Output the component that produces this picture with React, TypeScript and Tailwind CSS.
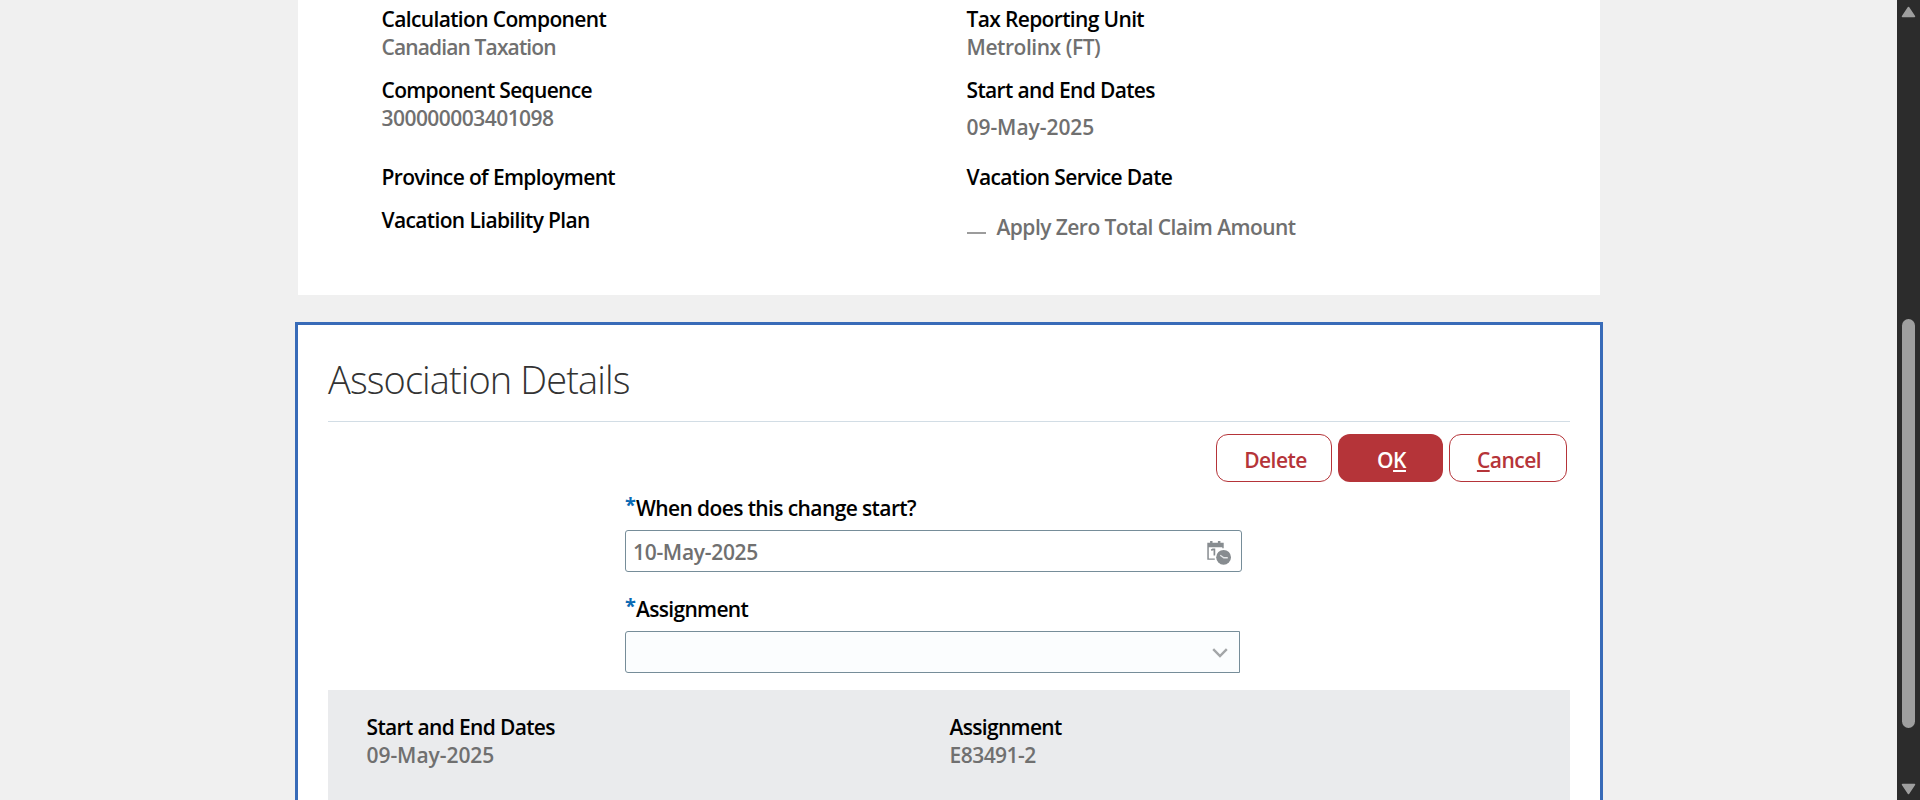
import React from "react";

function Label({ children, className = "" }: { children: React.ReactNode; className?: string }) {
  return <div className={`h-7 leading-[28px] whitespace-nowrap text-black ${className}`}>{children}</div>;
}

function Value({ children, className = "" }: { children: React.ReactNode; className?: string }) {
  return <div className={`h-7 leading-[28px] whitespace-nowrap text-[#707070] ${className}`}>{children}</div>;
}

function Required() {
  return <span className="-mt-[3px] w-[11px] shrink-0 text-[20px] font-bold text-[#0a6ab4]">*</span>;
}

function CalendarIcon() {
  return (
    <svg width="24" height="24" viewBox="0 0 24 24" className="mt-[3px] shrink-0">
      <path d="M0.300 1.800h16.400v5.500h-1.400V6.300H1.800V17.500h6v1.300H0.300z" fill="#878c90" />
      <path d="M3.100 0h2.400v4H3.100zM10.900 0h2.500v4h-2.500z" fill="#878c90" />
      <path d="M4.200 9.300l1.600-.9h1.600v6" fill="none" stroke="#878c90" strokeWidth="1.700" />
      <circle cx="16.600" cy="16.300" r="8.400" fill="#fff" />
      <circle cx="16.600" cy="16.300" r="7.400" fill="#878c90" />
      <path d="M13.200 14.200l3.600 2.500h4" fill="none" stroke="#e4e6e7" strokeWidth="1.400" />
    </svg>
  );
}

function PersonDetails() {
  return (
    <section className="flex h-[295px] w-[1302px] shrink-0 bg-white pl-[83.5px] pt-[5px]">
      <div className="w-[585px]">
        <Label className="tracking-[-0.64px]">Calculation Component</Label>
        <Value className="tracking-[-0.87px]">Canadian Taxation</Value>
        <Label className="mt-[15px] tracking-[-0.68px]">Component Sequence</Label>
        <Value className="tracking-[-0.54px]">300000003401098</Value>
        <Label className="mt-[31px] tracking-[-0.64px]">Province of Employment</Label>
        <Label className="mt-[15px] tracking-[-0.64px]">Vacation Liability Plan</Label>
      </div>
      <div>
        <Label className="tracking-[-0.65px]">Tax Reporting Unit</Label>
        <Value className="tracking-[-0.45px]">Metrolinx (FT)</Value>
        <Label className="mt-[15px] tracking-[-0.65px]">Start and End Dates</Label>
        <Value className="mt-[9px] tracking-[-0.05px]">09-May-2025</Value>
        <Label className="mt-[22px] tracking-[-0.65px]">Vacation Service Date</Label>
        <div className="mt-[22px] flex">
          <span className="mt-[19px] h-[2px] w-[19px] bg-[#9c9c9c]" />
          <Value className="ml-[11px] tracking-[-0.55px]">Apply Zero Total Claim Amount</Value>
        </div>
      </div>
    </section>
  );
}

function AssociationDetails() {
  return (
    <section className="mt-[27px] h-[478px] w-[1308px] shrink-0 border-[3px] border-b-0 border-[#386bb8] bg-white px-[30px]">
      <h2 className="h-24 pt-[28px] text-[38px] font-light leading-[52px] tracking-[-0.9px] text-[#333]">
        Association Details
      </h2>
      <div className="h-px bg-[#d2dde5]" />
      <div className="mt-3 flex justify-end gap-[6px] pr-[3px] text-[#b53439]">
        <button className="h-12 w-[116px] rounded-[12px] border border-[#b53439] pl-[3px] pt-[4px] leading-[28px] tracking-[-0.55px]">Delete</button>
        <button className="h-12 w-[105px] rounded-[12px] bg-[#b53439] pl-[2px] pt-[4px] leading-[28px] tracking-[-0.5px] text-white">
          O<span className="underline decoration-2 underline-offset-2">K</span>
        </button>
        <button className="h-12 w-[118px] rounded-[12px] border border-[#b53439] pl-[2px] pt-[4px] leading-[28px] tracking-[-0.5px]">
          <span className="underline decoration-2 underline-offset-2">C</span>ancel
        </button>
      </div>

      <div className="ml-[297px] mt-3">
        <Label className="flex tracking-[-0.61px]"><Required />When does this change start?</Label>
        <div className="mt-2 flex h-[42px] w-[617px] items-center justify-between rounded-[3px] border border-[#768d99] bg-white pl-[7px] pr-[10px]">
          <Value className="mt-[2px] tracking-[-0.3px]">10-May-2025</Value>
          <CalendarIcon />
        </div>
        <Label className="mt-[23px] flex tracking-[-0.68px]"><Required />Assignment</Label>
        <div className="mt-2 flex h-[42px] w-[615px] items-center justify-end rounded-l-[3px] border border-[#768d99] bg-[#fbfdfe] pr-[11px]">
          <svg width="16" height="10" viewBox="0 0 16 10" className="mt-[2px]">
            <path d="M1.200 1.200L8 8l6.800-6.800" fill="none" stroke="#a3a6a8" strokeWidth="2.400" />
          </svg>
        </div>
      </div>

      <div className="mt-[17px] flex h-[110px] bg-[#eaebed] pl-[38.5px] pt-[23px]">
        <div className="w-[583px]">
          <Label className="tracking-[-0.65px]">Start and End Dates</Label>
          <Value className="tracking-[-0.05px]">09-May-2025</Value>
        </div>
        <div>
          <Label className="tracking-[-0.68px]">Assignment</Label>
          <Value className="tracking-[-0.53px]">E83491-2</Value>
        </div>
      </div>
    </section>
  );
}

export default function App() {
  return (
    <div className="flex h-[800px] w-[1920px] overflow-hidden bg-[#f0f0f0] font-['Open_Sans','Noto_Sans',sans-serif] text-[21px] font-[560]">
      <main className="flex w-[1897px] shrink-0 flex-col items-center pl-px">
        <PersonDetails />
        <AssociationDetails />
      </main>
      <aside className="flex w-[23px] shrink-0 flex-col items-center bg-[#2c2c2c]">
        <svg width="15" height="12" viewBox="0 0 15 12" className="mt-[6px]">
          <path d="M7.500 1.500L13.500 10.500H1.500z" fill="#9f9f9f" stroke="#9f9f9f" strokeWidth="1.500" strokeLinejoin="round" />
        </svg>
        <div className="mt-[301px] h-[409px] w-[13px] rounded-full bg-[#9f9f9f]" />
        <svg width="15" height="12" viewBox="0 0 15 12" className="mt-[55px]">
          <path d="M7.500 10.500L1.500 1.500h12z" fill="#9f9f9f" stroke="#9f9f9f" strokeWidth="1.500" strokeLinejoin="round" />
        </svg>
      </aside>
    </div>
  );
}
